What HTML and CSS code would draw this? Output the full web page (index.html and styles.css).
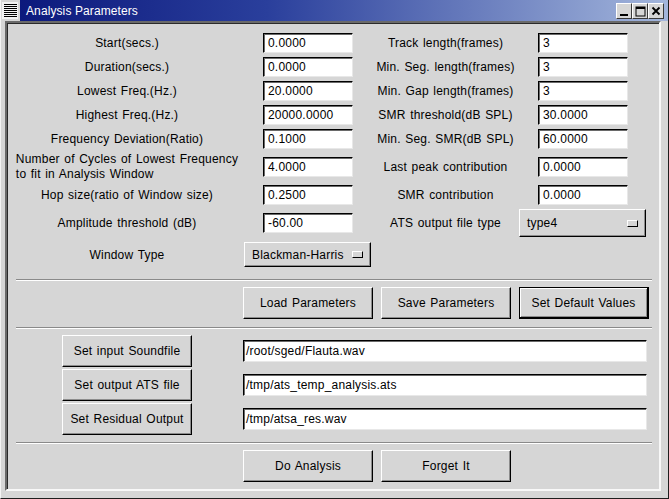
FILE: index.html
```html
<!DOCTYPE html>
<html>
<head>
<meta charset="utf-8">
<link rel="stylesheet" href="styles.css">
</head>
<body>
<div class="window">
  <div class="titlebar">
    <div class="menu-icon">
      <svg width="20" height="21" viewBox="0 0 20 21">
        <rect x="0" y="0" width="20" height="21" fill="#d6d6d6"/>
        <rect x="2" y="2" width="16" height="17" fill="#f2f2f2"/>
        <g fill="#000">
          <rect x="4" y="4" width="13" height="1"/>
          <rect x="4" y="6" width="13" height="1"/>
          <rect x="4" y="8" width="13" height="1"/>
          <rect x="4" y="10" width="13" height="1"/>
          <rect x="4" y="12" width="13" height="1"/>
          <rect x="4" y="14" width="13" height="1"/>
          <rect x="4" y="16" width="13" height="1"/>
        </g>
      </svg>
    </div>
    <div class="title">Analysis Parameters</div>
    <div class="wm-buttons">
      <span class="wm-btn"><svg width="14" height="14" viewBox="0 0 14 14"><rect x="3" y="10" width="8" height="2" fill="#000"/></svg></span>
      <span class="wm-btn"><svg width="14" height="14" viewBox="0 0 14 14"><rect x="3" y="3" width="9" height="9" fill="none" stroke="#000" stroke-width="1"/><rect x="3" y="3" width="9" height="2" fill="#000"/></svg></span>
      <span class="wm-btn"><svg width="14" height="14" viewBox="0 0 14 14"><path d="M3.5 3.5 L10.5 10.5 M10.5 3.5 L3.5 10.5" stroke="#000" stroke-width="1.8" fill="none"/></svg></span>
    </div>
  </div>
  <div class="frame">
    <div class="content">
      <div class="params">
        <div class="lbl lbl-l">Start(secs.)</div><div class="entry">0.0000</div><div class="lbl">Track length(frames)</div><div class="entry">3</div>
        <div class="lbl lbl-l">Duration(secs.)</div><div class="entry">0.0000</div><div class="lbl">Min. Seg. length(frames)</div><div class="entry">3</div>
        <div class="lbl lbl-l">Lowest Freq.(Hz.)</div><div class="entry">20.0000</div><div class="lbl">Min. Gap length(frames)</div><div class="entry">3</div>
        <div class="lbl lbl-l">Highest Freq.(Hz.)</div><div class="entry">20000.0000</div><div class="lbl">SMR threshold(dB SPL)</div><div class="entry">30.0000</div>
        <div class="lbl lbl-l">Frequency Deviation(Ratio)</div><div class="entry">0.1000</div><div class="lbl">Min. Seg. SMR(dB SPL)</div><div class="entry">60.0000</div>
        <div class="lbl lbl-l"><span class="multi">Number of Cycles of Lowest Frequency<br>to fit in Analysis Window</span></div><div class="entry">4.0000</div><div class="lbl">Last peak contribution</div><div class="entry">0.0000</div>
        <div class="lbl lbl-l">Hop size(ratio of Window size)</div><div class="entry">0.2500</div><div class="lbl">SMR contribution</div><div class="entry">0.0000</div>
        <div class="lbl lbl-l">Amplitude threshold (dB)</div><div class="entry">-60.00</div><div class="lbl">ATS output file type</div><div class="option option-tall"><span>type4</span><span class="ind"></span></div>
        <div class="lbl lbl-l">Window Type</div><div class="option"><span>Blackman-Harris</span><span class="ind"></span></div>
      </div>
      <div class="sep sep-1"></div>
      <div class="btnrow">
        <div class="btn">Load Parameters</div>
        <div class="btn">Save Parameters</div>
        <div class="btn btn-default">Set Default Values</div>
      </div>
      <div class="sep sep-2"></div>
      <div class="files">
        <div class="filerow"><div class="btn">Set input Soundfile</div><div class="entry entry-wide">/root/sged/Flauta.wav</div></div>
        <div class="filerow"><div class="btn">Set output ATS file</div><div class="entry entry-wide">/tmp/ats_temp_analysis.ats</div></div>
        <div class="filerow"><div class="btn">Set Residual Output</div><div class="entry entry-wide">/tmp/atsa_res.wav</div></div>
      </div>
      <div class="sep sep-3"></div>
      <div class="btnrow btnrow-bottom">
        <div class="btn">Do Analysis</div>
        <div class="btn">Forget It</div>
      </div>
    </div>
  </div>
</div>
</body>
</html>
```
FILE: styles.css
```css
html, body {
  margin: 0;
  padding: 0;
  background: #d6d6d6;
}
body {
  font-family: "Liberation Sans", Arial, sans-serif;
  font-size: 12px;
  color: #000;
}
.window {
  width: 669px;
  height: 499px;
  box-sizing: border-box;
  background: #d6d6d6;
  border-left: 1px solid #f4f4f4;
  border-right: 1px solid #1e1e1e;
  border-bottom: 1px solid #1e1e1e;
  display: flex;
  flex-direction: column;
  overflow: hidden;
}
.titlebar {
  height: 21px;
  flex: none;
  display: flex;
  align-items: center;
  background: linear-gradient(to right, #0a167a 0%, #2a3f9c 40%, #a3b6dc 100%);
  margin-left: -1px;
  padding-right: 4px;
}
.menu-icon {
  width: 20px;
  height: 21px;
  flex: none;
}
.menu-icon svg {
  display: block;
}
.title {
  flex: 1;
  color: #fff;
  padding-left: 6px;
  font-size: 12px;
  letter-spacing: 0.1px;
  line-height: 20px;
  white-space: nowrap;
}
.wm-buttons {
  display: flex;
  align-items: center;
  gap: 0;
}
.wm-btn {
  width: 16px;
  height: 16px;
  box-sizing: border-box;
  background: #d6d6d6;
  border: 1px solid;
  border-color: #ffffff #3a3a3a #3a3a3a #ffffff;
  display: flex;
  align-items: center;
  justify-content: center;
}
.wm-btn svg {
  display: block;
}
.frame {
  flex: 1;
  display: flex;
  padding: 0 7px 7px 4px;
  min-height: 0;
}
.content {
  flex: 1;
  border: 2px solid;
  border-color: #6a6a6a #f8f8f8 #f8f8f8 #6a6a6a;
  box-shadow: inset 1px 1px 0 #2a2a2a;
  background: #d6d6d6;
  display: flex;
  flex-direction: column;
}
.params {
  margin-top: 10px;
  display: grid;
  grid-template-columns: 256px 90px 185px 90px;
  grid-template-rows: 20px 20px 20px 20px 20px 28px 20px 28px 27px;
  row-gap: 4px;
  align-items: center;
}
.lbl, .btn, .entry, .option {
  letter-spacing: 0.2px;
  word-spacing: 1px;
}
.lbl {
  text-align: center;
  white-space: nowrap;
}
.lbl-l {
  padding-right: 16px;
}
.multi {
  display: inline-block;
  text-align: left;
  line-height: 15px;
}
.entry {
  height: 20px;
  box-sizing: border-box;
  background: #fff;
  border: 1px solid;
  border-color: #000 #e8e8e8 #e8e8e8 #000;
  box-shadow: inset 1px 1px 0 #6a6a6a;
  padding-left: 4px;
  line-height: 18px;
  white-space: nowrap;
  overflow: hidden;
}
.option {
  width: 127px;
  height: 25px;
  margin-left: -19px;
  box-sizing: border-box;
  border: 1px solid;
  border-color: #ffffff #000 #000 #ffffff;
  box-shadow: inset -1px -1px 0 #8c8c8c;
  display: flex;
  align-items: center;
  justify-content: space-between;
  padding: 0 7px 0 7px;
}
.option-tall {
  height: 28px;
}
.ind {
  width: 11px;
  height: 7px;
  box-sizing: border-box;
  border: 1px solid;
  border-color: #ffffff #000 #000 #ffffff;
  background: #d6d6d6;
}
.sep {
  height: 2px;
  margin: 0 7px 0 9px;
  border-top: 1px solid #8a8a8a;
  border-bottom: 1px solid #ffffff;
  box-sizing: border-box;
  flex: none;
}
.sep-1 { margin-top: 11px; }
.sep-2 { margin-top: 8px; }
.sep-3 { margin-top: 7px; }
.btnrow {
  display: flex;
  gap: 8px;
  margin-top: 6px;
  padding-left: 236px;
}
.btn {
  width: 130px;
  height: 32px;
  box-sizing: border-box;
  border: 1px solid;
  border-color: #ffffff #000 #000 #ffffff;
  box-shadow: inset -1px -1px 0 #8c8c8c;
  display: flex;
  align-items: center;
  justify-content: center;
  white-space: nowrap;
  flex: none;
}
.btn-default {
  border-color: #000;
  border-width: 1px 2px 2px 1px;
  box-shadow: inset 1px 1px 0 #ffffff, inset -1px -1px 0 #8c8c8c;
}
.files {
  margin-top: 6px;
  display: flex;
  flex-direction: column;
  gap: 2px;
  padding-left: 55px;
}
.filerow {
  display: flex;
  align-items: center;
  gap: 51px;
}
.entry-wide {
  width: 404px;
  height: 22px;
  line-height: 20px;
  padding-left: 2px;
}
.btnrow-bottom {
  margin-top: 6px;
}
```
